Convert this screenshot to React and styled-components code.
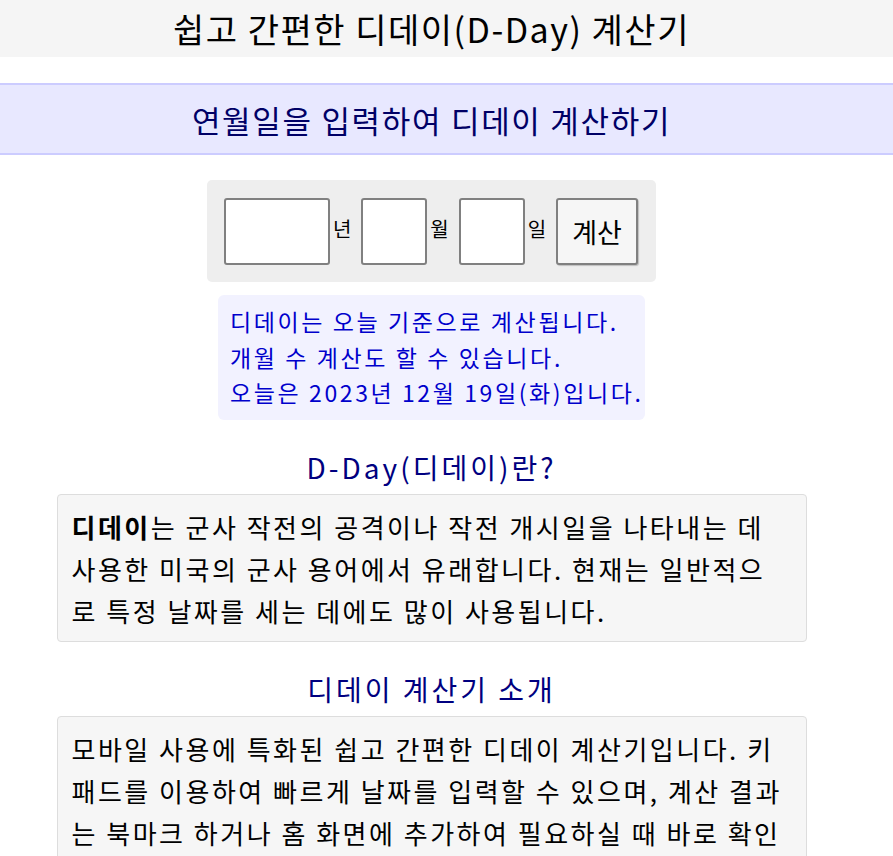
import React from 'react'
import styled, { createGlobalStyle } from 'styled-components'

const GlobalStyle = createGlobalStyle`
	body {
		margin: 0;
		background: #fff;
		font-family: 'Noto Sans CJK KR', 'Noto Sans', sans-serif;
		color: #000;
	}
`

const App = () => {
	return (
		<>
			<GlobalStyle />
			<Header>
				<h1>쉽고 간편한 디데이(D-Day) 계산기</h1>
			</Header>
			<Band>연월일을 입력하여 디데이 계산하기</Band>
			<Main>
				<DateForm onSubmit={e => e.preventDefault()}>
					<DateInput type='text' inputMode='numeric' $width={106} />
					<Unit>년</Unit>
					<DateInput type='text' inputMode='numeric' $width={66} />
					<Unit>월</Unit>
					<DateInput type='text' inputMode='numeric' $width={66} />
					<Unit>일</Unit>
					<CalcButton type='submit'>계산</CalcButton>
				</DateForm>
				<Notice>
					디데이는 오늘 기준으로 계산됩니다.
					<br />
					개월 수 계산도 할 수 있습니다.
					<br />
					오늘은 2023년 12월 19일(화)입니다.
				</Notice>
				<SectionTitle>D-Day(디데이)란?</SectionTitle>
				<Card>
					<b>디데이</b>는 군사 작전의 공격이나 작전 개시일을 나타내는 데
					사용한 미국의 군사 용어에서 유래합니다. 현재는 일반적으로 특정
					날짜를 세는 데에도 많이 사용됩니다.
				</Card>
				<SectionTitle>디데이 계산기 소개</SectionTitle>
				<Card>
					모바일 사용에 특화된 쉽고 간편한 디데이 계산기입니다. 키패드를
					이용하여 빠르게 날짜를 입력할 수 있으며, 계산 결과는 북마크 하거나
					홈 화면에 추가하여 필요하실 때 바로 확인하실 수 있습니다.
				</Card>
			</Main>
		</>
	)
}

export default App

const Header = styled.header`
	background: #f5f5f5;
	height: 57px;
	padding-right: 30px;
	display: flex;
	align-items: center;
	justify-content: center;
	h1 {
		margin: 0;
		font-size: 34px;
		font-weight: 400;
		letter-spacing: 1.5px;
	}
`

const Band = styled.h2`
	margin: 26px 0 0;
	height: 68px;
	padding-right: 30px;
	display: flex;
	align-items: center;
	justify-content: center;
	background: #e8e8ff;
	border-top: 2px solid #ccccff;
	border-bottom: 2px solid #ccccff;
	color: #000066;
	font-size: 31px;
	font-weight: 400;
	letter-spacing: 1.7px;
`

const Main = styled.main`
	width: 863px;
	display: flex;
	flex-direction: column;
	align-items: center;
	padding-bottom: 40px;
`

const DateForm = styled.form`
	margin-top: 25px;
	display: flex;
	align-items: center;
	padding: 18px 18px 17px 17px;
	background: #eeeeee;
	border-radius: 5px;
`

const DateInput = styled.input`
	box-sizing: border-box;
	width: ${p => p.$width}px;
	height: 67px;
	border: 2px solid #808080;
	border-radius: 3px;
	background: #fff;
	font-size: 24px;
	text-align: center;
	outline: none;
`

const Unit = styled.span`
	font-size: 20px;
	line-height: 1;
	margin: 0 10px 6px 3px;
`

const CalcButton = styled.button`
	box-sizing: border-box;
	width: 82px;
	height: 67px;
	border: 2px solid #808080;
	border-radius: 3px;
	background: #f6f6f6;
	font-family: inherit;
	font-size: 27px;
	color: #000;
	box-shadow: 1px 1px 1px rgba(0, 0, 0, 0.2);
`

const Notice = styled.p`
	margin: 13px 0 0;
	width: 427px;
	box-sizing: border-box;
	padding: 9px 12px 9px;
	background: #f2f2ff;
	border-radius: 6px;
	color: #0000cc;
	font-size: 23px;
	line-height: 35.5px;
	letter-spacing: 2.6px;
	white-space: nowrap;
`

const SectionTitle = styled.h3`
	margin: 28px 0 8px;
	line-height: 38px;
	color: #000080;
	font-size: 28px;
	font-weight: 400;
	letter-spacing: 3px;
`

const Card = styled.div`
	width: 750px;
	box-sizing: border-box;
	padding: 11px 20px 9px 14px;
	background: #f6f6f6;
	border: 1px solid #dddddd;
	border-radius: 4px;
	font-size: 26px;
	line-height: 42px;
	letter-spacing: 2.5px;
	word-break: break-all;
	b {
		font-weight: 700;
	}
`
